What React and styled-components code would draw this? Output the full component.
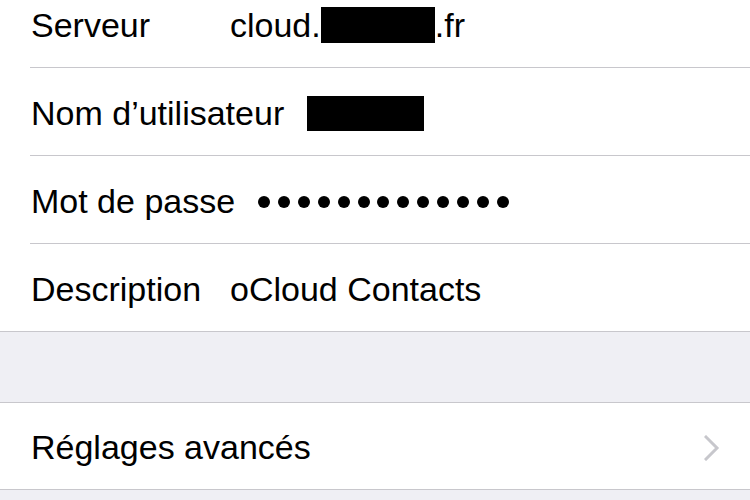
import React from "react";
import styled, { createGlobalStyle } from "styled-components";

const Global = createGlobalStyle`
  html, body { margin: 0; padding: 0; background: #efeff4; overflow: hidden; }
  body { font-family: "Liberation Sans", Arial, Helvetica, sans-serif; }
`;

const Screen = styled.div`
  width: 750px;
  height: 500px;
  overflow: hidden;
  background: #efeff4;
`;

const Scroller = styled.div`
  display: flex;
  flex-direction: column;
  margin-top: -20px;
`;

const Group = styled.div`
  background: #ffffff;
  border-bottom: 1px solid #c8c7cc;
  border-top: ${(p) => (p.$top ? "1px solid #c8c7cc" : "none")};
`;

const Spacer = styled.div`
  height: 70px;
  background: #efeff4;
`;

const Row = styled.div`
  display: flex;
  align-items: center;
  height: ${(p) => p.$h || 87}px;
  padding: 3px 31px 0 31px;
  box-sizing: border-box;
  font-size: 34px;
  color: #000;
`;

const RowWrap = styled.div`
  & + & {
    margin-left: 30px;
    border-top: 1px solid #c8c7cc;
  }
  & + & > div {
    padding-left: 1px;
  }
`;

const Label = styled.span`
  box-sizing: border-box;
  min-width: 199px;
  padding-right: 23px;
  white-space: nowrap;
`;

const Value = styled.span`
  display: flex;
  align-items: center;
  white-space: nowrap;
`;

const Redacted = styled.span`
  display: inline-block;
  background: #000;
  width: ${(p) => p.$w}px;
  height: ${(p) => p.$h}px;
`;

const Dots = styled.span`
  display: flex;
  align-items: center;
  gap: 7.9px;
  padding-top: 1px;
`;

const Dot = styled.span`
  width: 12px;
  height: 12px;
  border-radius: 50%;
  background: #000;
`;

const Title = styled.span`
  flex: 1;
`;

const ChevronSlot = styled.span`
  display: flex;
  align-items: center;
  margin-right: -1px;
`;

const Chevron = () => (
  <svg width="16" height="26" viewBox="0 0 16 26">
    <polyline
      points="2,2 13,13 2,24"
      fill="none"
      stroke="#c7c7cc"
      strokeWidth="3"
      strokeLinecap="square"
    />
  </svg>
);

export default function App() {
  return (
    <Screen>
      <Global />
      <Scroller>
        <Group>
          <RowWrap>
            <Row>
              <Label>Serveur</Label>
              <Value>
                cloud.<Redacted $w={114} $h={36} />.fr
              </Value>
            </Row>
          </RowWrap>
          <RowWrap>
            <Row>
              <Label>Nom d’utilisateur</Label>
              <Value>
                <Redacted $w={117} $h={35} />
              </Value>
            </Row>
          </RowWrap>
          <RowWrap>
            <Row>
              <Label>Mot de passe</Label>
              <Dots>
                {Array.from({ length: 13 }).map((_, i) => (
                  <Dot key={i} />
                ))}
              </Dots>
            </Row>
          </RowWrap>
          <RowWrap>
            <Row>
              <Label>Description</Label>
              <Value>oCloud Contacts</Value>
            </Row>
          </RowWrap>
        </Group>
        <Spacer />
        <Group $top>
          <Row $h={86}>
            <Title>Réglages avancés</Title>
            <ChevronSlot>
              <Chevron />
            </ChevronSlot>
          </Row>
        </Group>
      </Scroller>
    </Screen>
  );
}
